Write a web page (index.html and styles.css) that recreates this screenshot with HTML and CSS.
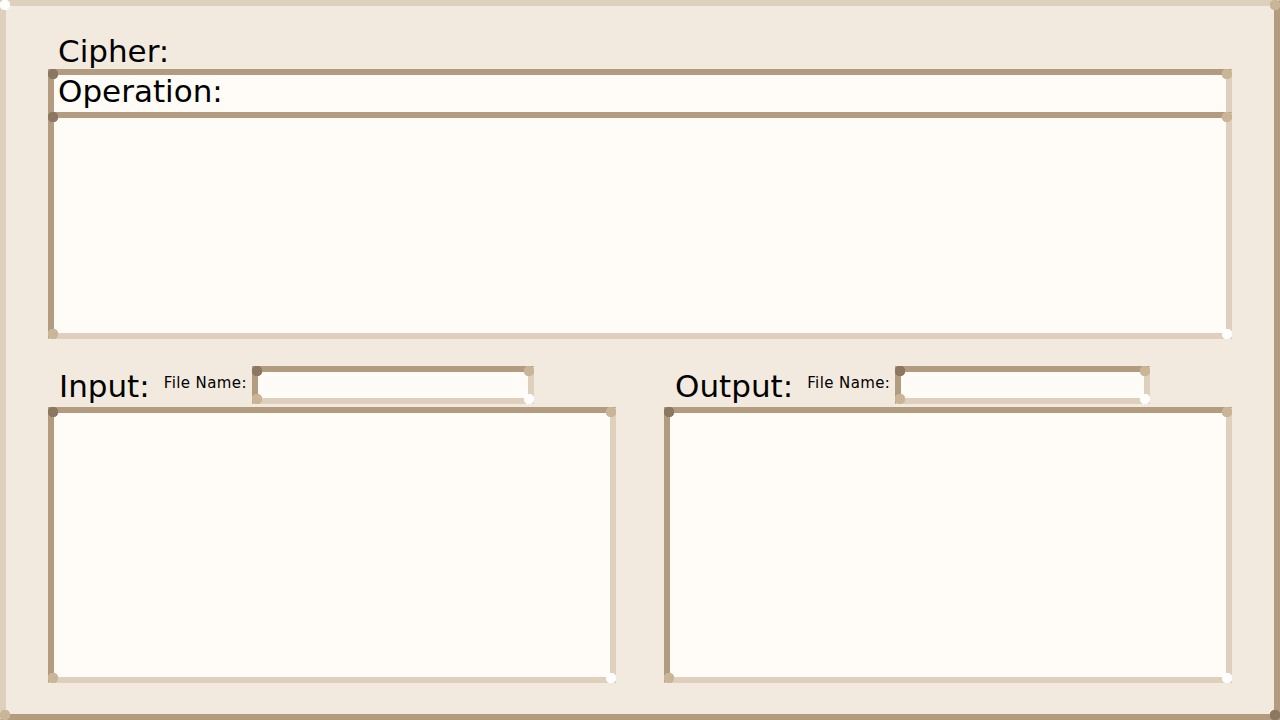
FILE: index.html
```html
<!DOCTYPE html>
<html lang="en">
<head>
    <meta charset="UTF-8">
    <meta name="viewport" content="width=device-width, initial-scale=1.0">
    <title>Cipher</title>
    <link rel="stylesheet" href="styles.css">
</head>
<body>

<div class="frame">
    <div class="cipher-row">Cipher:</div>

    <div class="well operation">
        <span class="operation-label">Operation:</span>
    </div>
    <div class="well main-box">
        <textarea class="area"></textarea>
    </div>

    <div class="io">
        <div class="io-col">
            <div class="io-head">
                <span class="io-label">Input:</span>
                <span class="file-label">File Name:</span>
                <div class="well file-box"><input class="file-input" type="text"></div>
            </div>
            <div class="well io-box">
                <textarea class="area"></textarea>
            </div>
        </div>
        <div class="io-col">
            <div class="io-head">
                <span class="io-label">Output:</span>
                <span class="file-label">File Name:</span>
                <div class="well file-box"><input class="file-input" type="text"></div>
            </div>
            <div class="well io-box">
                <textarea class="area"></textarea>
            </div>
        </div>
    </div>
</div>

</body>
</html>
```

FILE: styles.css
```css
* {
    margin: 0;
    padding: 0;
    box-sizing: border-box;
}

body {
    font-family: 'DejaVu Sans', sans-serif;
    background-color: #f3eadf;
    color: #000;
}

.frame {
    position: relative;
    width: 1280px;
    height: 720px;
    padding: 0 42px 31px 42px;
    background-color: #f3eadf;
    border: 6px solid;
    border-color: #dfd0be #b29b7e #b29b7e #dfd0be;
}

/* little diamonds in the corners of the raised frame */
.frame::after {
    content: '';
    position: absolute;
    inset: -6px;
    pointer-events: none;
    background:
        radial-gradient(circle at 5px 5px, #ffffff 5px, transparent 5.5px),
        radial-gradient(circle at calc(100% - 5px) 5px, #cbb597 5px, transparent 5.5px),
        radial-gradient(circle at 5px calc(100% - 5px), #cbb597 5px, transparent 5.5px),
        radial-gradient(circle at calc(100% - 5px) calc(100% - 5px), #8c7760 5px, transparent 5.5px);
}

.cipher-row {
    height: 63px;
    padding: 30px 0 0 10px;
    font-size: 31px;
    line-height: 31px;
}

/* sunken boxes */
.well {
    position: relative;
    background-color: #fffcf8;
    border: 6px solid;
    border-color: #b29b7e #dfd0be #dfd0be #b29b7e;
}

.well::after {
    content: '';
    position: absolute;
    inset: -6px;
    pointer-events: none;
    background:
        radial-gradient(circle at 5px 5px, #8c7760 5px, transparent 5.5px),
        radial-gradient(circle at calc(100% - 5px) 5px, #cbb597 5px, transparent 5.5px),
        radial-gradient(circle at 5px calc(100% - 5px), #cbb597 5px, transparent 5.5px),
        radial-gradient(circle at calc(100% - 5px) calc(100% - 5px), #ffffff 5px, transparent 5.5px);
}

.operation {
    height: 43px;
    border-bottom: 0;
    padding: 1px 0 0 4px;
    font-size: 31px;
    line-height: 31px;
}

.operation::after {
    inset: -6px -6px 0 -6px;
    background:
        radial-gradient(circle at 5px 5px, #8c7760 5px, transparent 5.5px),
        radial-gradient(circle at calc(100% - 5px) 5px, #cbb597 5px, transparent 5.5px);
}

.main-box {
    height: 227px;
}

.area {
    display: block;
    width: 100%;
    height: 100%;
    border: none;
    outline: none;
    resize: none;
    background: transparent;
    font-family: 'DejaVu Sans', sans-serif;
    font-size: 16px;
}

.io {
    display: flex;
    gap: 48px;
}

.io-col {
    flex: 1;
    display: flex;
    flex-direction: column;
}

.io-head {
    height: 68px;
    display: flex;
    align-items: flex-end;
    padding: 0 82px 3px 11px;
}

.io-label {
    font-size: 31px;
    line-height: 31px;
    margin-bottom: 2px;
    margin-right: 14px;
}

.file-label {
    font-size: 15px;
    line-height: 15px;
    letter-spacing: 0.4px;
    margin-bottom: 13px;
    margin-right: 5px;
    white-space: nowrap;
}

.file-box {
    flex: 1;
    height: 38px;
}

.file-input {
    display: block;
    width: 100%;
    height: 100%;
    border: none;
    outline: none;
    background: transparent;
    padding: 0 4px;
    font-family: 'DejaVu Sans', sans-serif;
    font-size: 14px;
}

.io-box {
    height: 276px;
}
```
